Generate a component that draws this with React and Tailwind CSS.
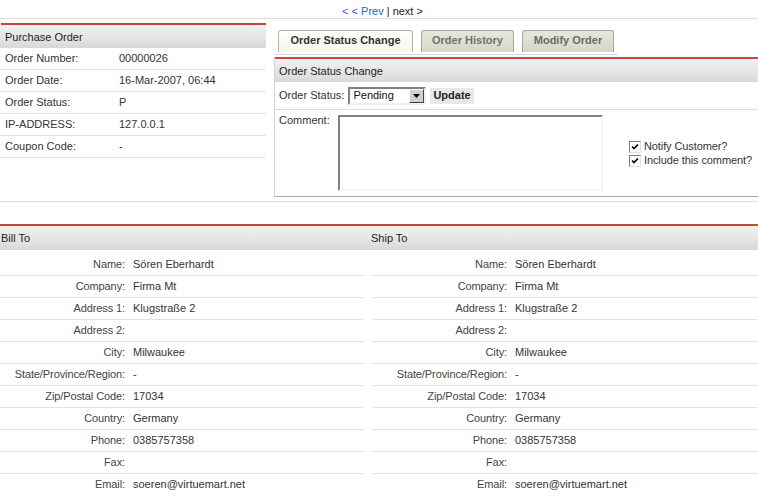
import React from "react";

const hdr =
  "bg-[linear-gradient(to_bottom,#f3eee7,#eeeeee_12%,#e4e4e4_60%,#d8d8d8)]";

function Check() {
  return (
    <span className="inline-flex w-[12px] h-[12px] bg-white border border-t-[#808080] border-l-[#808080] border-r-[#e0e0e0] border-b-[#e0e0e0] items-center justify-center mr-[3px]">
      <svg width="8" height="8" viewBox="0 0 8 8">
        <path d="M1 3.5 L3 5.5 L7 1.5" stroke="#000" strokeWidth="1.6" fill="none" />
      </svg>
    </span>
  );
}

const orderRows = [
  ["Order Number:", "00000026"],
  ["Order Date:", "16-Mar-2007, 06:44"],
  ["Order Status:", "P"],
  ["IP-ADDRESS:", "127.0.0.1"],
  ["Coupon Code:", "-"],
];

const addr = [
  ["Name:", "Sören Eberhardt"],
  ["Company:", "Firma Mt"],
  ["Address 1:", "Klugstraße 2"],
  ["Address 2:", ""],
  ["City:", "Milwaukee"],
  ["State/Province/Region:", "-"],
  ["Zip/Postal Code:", "17034"],
  ["Country:", "Germany"],
  ["Phone:", "0385757358"],
  ["Fax:", ""],
  ["Email:", "soeren@virtuemart.net"],
];

function AddrTable({ labelW }) {
  return (
    <div className="flex flex-col mt-[4px]">
      {addr.map(([l, v]) => (
        <div key={l} className="flex h-[22px] border-b border-[#e3e3e3] items-center">
          <div className={`${labelW} shrink-0 text-right pr-[3px] text-[#444] tracking-[-0.1px]`}>{l}</div>
          <div className="pl-[5px] text-[#333]">{v}</div>
        </div>
      ))}
    </div>
  );
}

export default function App() {
  return (
    <div className="w-[758px] h-[495px] overflow-hidden bg-white font-['Liberation_Sans',Arial,sans-serif] text-[11px] leading-[13px] text-[#333]">
      {/* nav */}
      <div className="h-[19px] border-b border-[#dddddd] flex justify-center pl-[7px] pt-[5px]">
        <span>
          <span className="text-[#1f5fcf]">&lt; &lt; Prev</span>
          <span className="text-[#222]"> | next &gt;</span>
        </span>
      </div>

      {/* top */}
      <div className="flex">
        <div className="w-[266px] shrink-0 mt-[4px]">
          <div className="h-[2px] bg-[#c4493a] ml-[1px]" />
          <div className={`h-[23px] ${hdr} flex items-center pl-[5px] pt-[1px] text-[#222]`}>Purchase Order</div>
          {orderRows.map(([l, v]) => (
            <div key={l} className="flex h-[22px] border-b border-[#e3e3e3] items-center">
              <div className="w-[119px] pl-[5px] shrink-0">{l}</div>
              <div>{v}</div>
            </div>
          ))}
        </div>

        <div className="ml-[8px] flex-1 mt-[11px]">
          <div className="w-[344px] h-[25px] border-b border-[#dcdcdc] flex gap-[8px] pl-[4px]">
            <div className="h-[22px] w-[135px] pb-[2px] rounded-t-[3px] border border-b-0 border-[#b4b4a4] bg-[linear-gradient(to_bottom,#ffffff,#f7f7ea)] flex items-center justify-center font-bold text-[#333]">
              Order Status Change
            </div>
            <div className="h-[22px] w-[93px] pb-[2px] rounded-t-[3px] border border-b-0 border-[#a8a898] bg-[linear-gradient(to_bottom,#e6e6da,#d6d6ca)] flex items-center justify-center font-bold text-[#707070]">
              Order History
            </div>
            <div className="h-[22px] w-[92px] pb-[2px] rounded-t-[3px] border border-b-0 border-[#a8a898] bg-[linear-gradient(to_bottom,#e6e6da,#d6d6ca)] flex items-center justify-center font-bold text-[#6a6a6a]">
              Modify Order
            </div>
          </div>

          <div className="mt-[2px] border-l border-[#d4d4d4] border-b border-b-[#a8a8a8]">
            <div className="h-[2px] bg-[#c4493a]" />
            <div className={`h-[23px] ${hdr} flex items-center pl-[4px] pt-[1px] text-[#222]`}>Order Status Change</div>
            <div className="h-[28px] border-b border-[#dddddd] flex items-center pl-[4px]">
              <span className="mr-[4px]">Order Status:</span>
              <div className="w-[78px] h-[18px] border-2 border-t-[#808080] border-l-[#808080] border-r-[#f0f0f0] border-b-[#f0f0f0] bg-white flex items-center justify-between">
                <span className="pl-[3px] text-[#111]">Pending</span>
                <span className="w-[15px] h-[14px] bg-[#d4d0c8] border border-t-white border-l-white border-r-[#404040] border-b-[#404040] flex items-center justify-center">
                  <svg width="7" height="4" viewBox="0 0 7 4">
                    <path d="M0 0 H7 L3.5 4 Z" fill="#000" />
                  </svg>
                </span>
              </div>
              <div className="ml-[4px] h-[16px] px-[3px] bg-[#e8e8e8] font-bold flex items-center text-[#222]">Update</div>
            </div>
            <div className="h-[86px] flex">
              <div className="w-[63px] shrink-0 pl-[4px] pt-[4px]">Comment:</div>
              <div className="mt-[5px] w-[265px] h-[76px] border-2 border-t-[#808080] border-l-[#808080] border-r-[#f4f4f4] border-b-[#f4f4f4] bg-white" />
              <div className="ml-[26px] flex flex-col justify-center gap-[1px] pt-[1px] tracking-[-0.1px]">
                <div className="flex items-center"><Check />Notify Customer?</div>
                <div className="flex items-center"><Check />Include this comment?</div>
              </div>
            </div>
          </div>
        </div>
      </div>

      <div className="mt-[4px] border-t border-[#dddddd]" />

      {/* address */}
      <div className="mt-[22px]">
        <div className="h-[2px] bg-[#c4493a]" />
        <div className={`h-[24px] ${hdr} flex items-center text-[#222]`}>
          <div className="w-[371px] pl-[1px]">Bill To</div>
          <div>Ship To</div>
        </div>
        <div className="flex">
          <div className="w-[364px] shrink-0">
            <AddrTable labelW="w-[128px]" />
          </div>
          <div className="ml-[8px] flex-1">
            <AddrTable labelW="w-[138px]" />
          </div>
        </div>
      </div>
    </div>
  );
}
